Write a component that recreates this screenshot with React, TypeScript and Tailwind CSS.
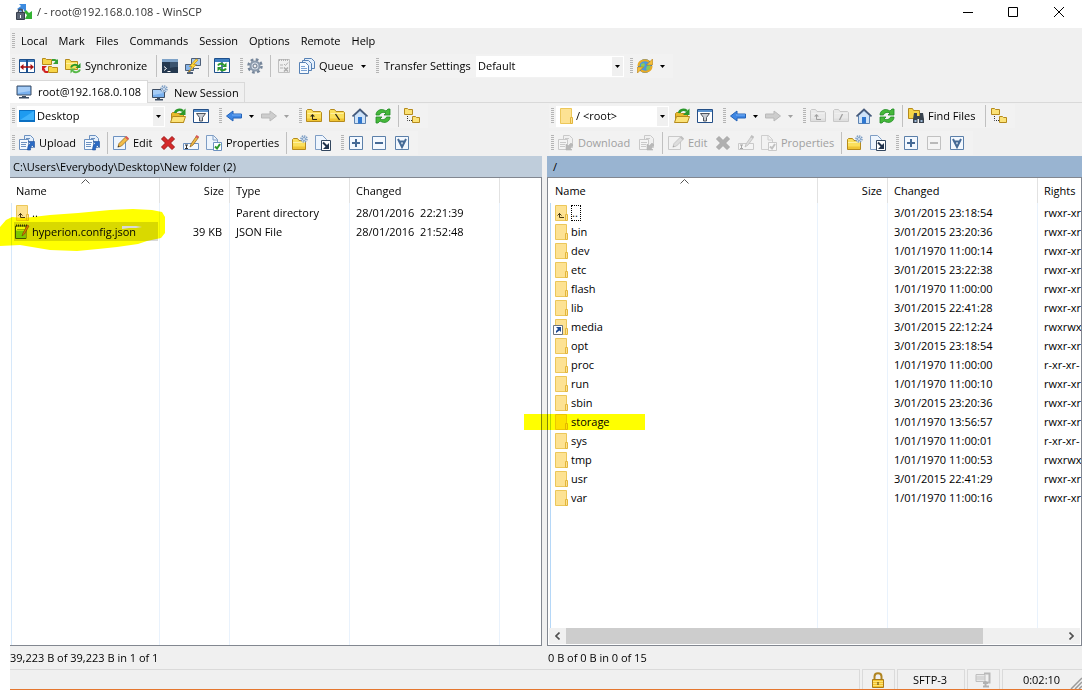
import type { ReactNode } from 'react'

interface FileRow {
  name: string
  icon: ReactNode
  size?: string
  type?: string
  changed: string
  rights?: string
  state?: 'selected' | 'focused'
}

interface IconProps {
  children: ReactNode
  off?: boolean
}

function Icon({ children, off }: IconProps) {
  return (
    <svg
      className={off ? 'w-4 h-4 shrink-0 grayscale opacity-40' : 'w-4 h-4 shrink-0'}
      viewBox="0 0 16 16"
      fill="none"
      aria-hidden="true"
    >
      {children}
    </svg>
  )
}

const folderShape = (
  <>
    <path d="M.5 13.5v-11l1-1h4l1.5 2h7.500l1 1v9z" fill="#fbe05c" stroke="#b58a1c" />
    <path d="M1.500 5.500h13" stroke="#fff0a0" />
    <path d="M1 10.500h14v2.500H1z" fill="#f0c534" />
  </>
)

const pageShape = <path d="M.5.5h7l4 4v10h-11z" fill="#eef5fd" stroke="#7e9dc4" />

function CompareIcon() {
  return (
    <Icon>
      <path d="M.5 1.500h15v13H.5z" fill="#fff" stroke="#1c4f8c" />
      <path d="M1 2h14v2H1z" fill="#3f7fc1" />
      <path d="M8 2v12" stroke="#1c4f8c" strokeWidth="2" />
      <path d="M1 9l3.500-3v2.200h7V6L15 9l-3.500 3V9.800h-7V12z" fill="#a81010" />
    </Icon>
  )
}

function SyncFoldersIcon() {
  return (
    <Icon>
      <path d="M.5 6.500v-6h3l1 1h5v5z" fill="#f7d548" stroke="#b58a1c" />
      <path d="M6.500 14.500v-6h3l1 1h5v5z" fill="#f7d548" stroke="#b58a1c" />
      <path d="M10 2h2.500c1.500 0 2 1 2 2v1" stroke="#35a035" strokeWidth="2" />
      <path d="M11 6h5V1z" fill="#35a035" />
      <path d="M6 14H4c-1.500 0-2-1-2-3" stroke="#d02020" strokeWidth="2" />
      <path d="M0 13V8h5z" fill="#d02020" />
    </Icon>
  )
}

function SynchronizeIcon() {
  return (
    <Icon>
      <path d="M.5 11.500v-10h4l1.500 2h6.500v8z" fill="#fbe05c" stroke="#b58a1c" />
      <path d="M1 5.500h11" stroke="#fff0a0" />
      <path d="M6 9.500c1-3 5-3.500 7-1.500" stroke="#2b982b" strokeWidth="2" />
      <path d="M15.500 5v5h-5z" fill="#2b982b" />
      <path d="M15 11.500c-1 3-5 3.500-7 1.500" stroke="#57b947" strokeWidth="2" />
      <path d="M5.500 15.500v-5h5z" fill="#57b947" />
    </Icon>
  )
}

function TerminalIcon() {
  return (
    <Icon>
      <path d="M0 1h16v14H0z" fill="#24384f" />
      <path d="M0 1h16v3H0z" fill="#7fa3c8" />
      <path d="M8 4h8v5c-3 0-6 0-8 1z" fill="#3a536e" />
      <path d="M2 8.500l2.500 2L2 12.500" stroke="#fff" />
      <path d="M5.500 13.500h3" stroke="#fff" />
    </Icon>
  )
}

function PuttyIcon() {
  return (
    <Icon>
      <path d="M6.500.5h9v7h-9z" fill="#a9c8ea" stroke="#4d5f78" />
      <path d="M9 10.500h5" stroke="#4d5f78" />
      <path d="M.5 6.500h8v6h-8z" fill="#86b4e8" stroke="#4d5f78" />
      <path d="M2 15h6M4.500 13v2" stroke="#4d5f78" strokeWidth="2" />
      <path d="M11 1L4.500 8.500H7L3.500 14 11.500 6.500H8.500L13 2z" fill="#ffd83a" stroke="#c58e12" strokeWidth=".7" />
    </Icon>
  )
}

function PageRefreshIcon() {
  return (
    <Icon>
      <path d="M.5.5h15v14H.5z" fill="#fff" stroke="#1c4f8c" />
      <path d="M1 1h14v3H1z" fill="#3f7fc1" />
      <path d="M8 4v10" stroke="#1c4f8c" strokeWidth="1.500" />
      <path d="M4 7.500c1-2 4-2.500 6-.5" stroke="#2b982b" strokeWidth="2" />
      <path d="M12.500 4.500v4.500H8z" fill="#2b982b" />
      <path d="M12 10.500c-1 2-4 2.500-6 .5" stroke="#2b982b" strokeWidth="2" />
      <path d="M3.500 13.500V9H8z" fill="#2b982b" />
    </Icon>
  )
}

function GearIcon() {
  return (
    <Icon>
      <circle cx="8" cy="8" r="6.500" stroke="#76869a" strokeWidth="2.500" strokeDasharray="2.700 2.400" />
      <circle cx="8" cy="8" r="4.500" fill="#d5dde7" stroke="#8b9aac" strokeWidth="2" />
      <circle cx="8" cy="8" r="2" fill="#f0f0f0" stroke="#66768a" />
    </Icon>
  )
}

function ChecklistIcon() {
  return (
    <Icon off>
      <path d="M2.500 1.500h11v13h-11z" fill="#eee" stroke="#777" />
      <path d="M3 2h10" stroke="#555" strokeWidth="2" strokeDasharray="1 1" />
      <path d="M8 6l1.500 1.500L12 4.500M4 7h3M4 10h3" stroke="#555" />
      <path d="M8 9.500l4 4M12 9.500l-4 4" stroke="#444" strokeWidth="1.500" />
    </Icon>
  )
}

function QueueIcon() {
  return (
    <Icon>
      <path d="M5.500.5h7l3 3v7h-10z" fill="#e4effb" stroke="#5681b5" />
      <path d="M3.500 2.500h6l3 3v7h-9z" fill="#e4effb" stroke="#5681b5" />
      <path d="M.5 4.500h6l3 3v8h-9z" fill="#f5faff" stroke="#5681b5" />
      <path d="M2 8.500h4M2 10.500h6M2 12.500h6" stroke="#7ba3d4" />
    </Icon>
  )
}

function GlobeIcon() {
  return (
    <Icon>
      <circle cx="8" cy="8" r="6.500" fill="#4b97dc" stroke="#3577b8" />
      <path d="M4 6l3-1 1 2-2 3-2-1zM10 8l3-1 1 2-3 4-2-2z" fill="#8bc95a" />
      <path d="M1.500 8C1.500 3 7 .8 12 3.500" stroke="#e9ab25" strokeWidth="2" />
      <path d="M15.500 1v6h-6z" fill="#f3bf38" stroke="#b87e14" strokeWidth=".6" />
      <path d="M14.500 8c0 5-5.500 7.200-10.500 4.500" stroke="#e9ab25" strokeWidth="2" />
      <path d="M.5 15V9h6z" fill="#f3bf38" stroke="#b87e14" strokeWidth=".6" />
    </Icon>
  )
}

function MonitorIcon() {
  return (
    <Icon>
      <path d="M1 2h14v9H1z" fill="#79b0ee" stroke="#3c4d63" />
      <path d="M2 3h12v4L2 9z" fill="#a6cdf7" />
      <path d="M6 12h4v1H6zM3 13h10v1.500H3z" fill="#3c4d63" />
    </Icon>
  )
}

function NewSessionIcon() {
  return (
    <Icon>
      <path d="M.5 4.500h12v8H.5z" fill="#79b0ee" stroke="#3c4d63" />
      <path d="M1 5h11v3L1 10z" fill="#a6cdf7" />
      <path d="M5 13h3v1H5zM3 14h8v1.500H3z" fill="#3c4d63" />
      <circle cx="12" cy="4" r="3" fill="#e9f1fa" stroke="#7d9dc2" strokeWidth="1.500" strokeDasharray="1.500 .8" />
      <circle cx="12" cy="4" r="1.500" stroke="#7d9dc2" />
    </Icon>
  )
}

function OpenFolderIcon() {
  return (
    <Icon>
      <path d="M1.500 14.500v-9l1-1h4l1 1h6v9z" fill="#e8b92b" stroke="#b58a1c" />
      <path d="M.5 14.500l2-6h13l-2 6z" fill="#fbe277" stroke="#b58a1c" />
      <path d="M5 5c1-3.500 5-4 8-2" stroke="#2b982b" strokeWidth="2.500" />
      <path d="M15.500.5v6.500h-6.500z" fill="#2b982b" />
    </Icon>
  )
}

function FilterIcon() {
  return (
    <Icon>
      <path d="M.5 1.500h15v13H.5z" fill="#fff" stroke="#244f87" />
      <path d="M1 2h14v2H1z" fill="#5a93cf" />
      <path d="M3.500 5.500h9l-3 4v3.500h-3V9.500z" fill="#c9cdd3" stroke="#4d545e" />
    </Icon>
  )
}

function BackIcon() {
  return (
    <Icon>
      <path d="M.5 8L7 3v3h8.500v4H7v3z" fill="#3f87e4" stroke="#2463b8" />
      <path d="M6 7h9" stroke="#79b1f5" />
    </Icon>
  )
}

function ForwardIcon() {
  return (
    <Icon>
      <path d="M15.500 8L9 3v3H.5v4H9v3z" fill="#cdcdcd" stroke="#b9b9b9" />
    </Icon>
  )
}

function ParentFolderIcon({ off }: { off?: boolean }) {
  return (
    <Icon off={off}>
      {folderShape}
      <path d="M6.500 7v4.500H11" stroke="#2b2412" />
      <path d="M4 8.500L6.500 6 9 8.500z" fill="#2b2412" />
    </Icon>
  )
}

function RootFolderIcon({ off }: { off?: boolean }) {
  return (
    <Icon off={off}>
      {folderShape}
      <path d={off ? 'M9.500 6l-3 6' : 'M6.500 6l4 6'} stroke="#2b2412" strokeWidth="1.300" />
    </Icon>
  )
}

function HomeIcon() {
  return (
    <Icon>
      <path d="M2.500 7.500L8 2.500l5.500 5v8h-11z" fill="#cfe3f8" stroke="#5c83b2" />
      <path d="M.5 8.500L8 1.500l7.500 7" stroke="#44597a" strokeWidth="1.700" />
      <path d="M6 9h4v6.500H6z" fill="#2f77d0" />
    </Icon>
  )
}

function RefreshIcon() {
  return (
    <Icon>
      <path d="M1 7c0-4 4-6.500 8-5l2 1 2-2h2v6H9l2-2C8 3.500 5 5 4.500 7z" fill="#46b83a" stroke="#1f8a25" strokeWidth=".8" />
      <path d="M15 9c0 4-4 6.500-8 5l-2-1-2 2H1V9h6l-2 2c3 1.500 6 0 6.500-2z" fill="#46b83a" stroke="#1f8a25" strokeWidth=".8" />
    </Icon>
  )
}

function TreeIcon() {
  return (
    <Icon>
      <path d="M.5 6.500v-6h3l1 1h4v5z" fill="#fbe277" stroke="#b58a1c" />
      <path d="M8.500 14.500v-6h3l1 1h3v5z" fill="#fbe277" stroke="#b58a1c" />
      <path d="M3.500 8v4.500H8" stroke="#333" strokeDasharray="1 1" />
    </Icon>
  )
}

function TransferIcon({ off }: { off?: boolean }) {
  return (
    <Icon off={off}>
      <path d="M5.500.5h6l3 3v9h-9z" fill="#e4effb" stroke="#6c91c0" />
      <path d="M.5 4.500h9v10h-9z" fill="#f5faff" stroke="#6c91c0" />
      <path d="M2 7.500h6M2 9.500h5M2 11.500h5M7 3.500h4" stroke="#6c91c0" />
      <path d={off ? 'M8 9v6h6l-2-2 3-3-2-2-3 3z' : 'M9.500 6.500h6v6l-2-2c-1.500.5-2 2-2 4.500h-3c0-3.500 1-5.500 3-6.500z'} fill="#2a6ac4" stroke={off ? '#555' : '#1c4f9c'} strokeWidth=".6" />
    </Icon>
  )
}

function EditIcon({ off }: { off?: boolean }) {
  return (
    <Icon off={off}>
      <path d="M.5 1.500h12v13H.5z" fill="#eef5fd" stroke="#6c91c0" />
      <path d="M5 12l1-3.500L13 1.500l2.500 2.500-7 7z" fill="#f2bd49" stroke="#9a6a1c" strokeWidth=".8" />
      <path d="M12 2.500l1.500-1.500 2.500 2.500-1.500 1.500z" fill="#d9585a" />
      <path d="M4.500 12.500l2-1-1-1z" fill="#333" />
    </Icon>
  )
}

function DeleteIcon({ off }: { off?: boolean }) {
  return (
    <Icon off={off}>
      <path d="M1.500 4l2.500-2.500L8 5.500l4-4L14.500 4l-4 4 4 4L12 14.500l-4-4-4 4L1.500 12l4-4z" fill="#d62a2a" stroke="#a01414" />
    </Icon>
  )
}

function RenameIcon({ off }: { off?: boolean }) {
  return (
    <Icon off={off}>
      <path d="M.5 8.500h15v6H.5z" fill="#f5faff" stroke="#6c91c0" />
      <path d="M2 10h3M3.500 10v3.500M2 13.500h3" stroke="#333" />
      <path d="M7 12l1-3L13.500 1l2 1.500L10 10z" fill="#f2bd49" stroke="#9a6a1c" strokeWidth=".8" />
      <path d="M12.500 2l1-2 2.500 1.500-1.500 2z" fill="#d9585a" />
    </Icon>
  )
}

function PropertiesIcon({ off }: { off?: boolean }) {
  return (
    <Icon off={off}>
      {pageShape}
      <path d="M7 .5v4.500h4.500" stroke="#7e9dc4" />
      <path d="M7.500 7.500h8v8h-8z" fill="#fff" stroke="#6c91c0" />
      <path d="M9 11.500l2 2L14 9" stroke="#2b982b" strokeWidth="2" />
    </Icon>
  )
}

function NewFolderIcon() {
  return (
    <Icon>
      <path d="M.5 14.500v-10l1-1h4l1.500 2h6.500v9z" fill="#fbe05c" stroke="#b58a1c" />
      <path d="M1 7.500h12" stroke="#fff0a0" />
      <path d="M1 11.500h12V14H1z" fill="#f0c534" />
      <circle cx="12" cy="4" r="3" fill="#e9f1fa" stroke="#7d9dc2" strokeWidth="1.500" strokeDasharray="1.500 .8" />
      <circle cx="12" cy="4" r="1.500" stroke="#7d9dc2" />
    </Icon>
  )
}

function ShortcutIcon() {
  return (
    <Icon>
      {pageShape}
      <path d="M6.500 5.500h9v10h-9z" fill="#fff" stroke="#33475f" />
      <path d="M8 7.500l4 4" stroke="#22344d" strokeWidth="2" />
      <path d="M14 8v6H8z" fill="#22344d" />
    </Icon>
  )
}

function BoxIcon({ mark, off }: { mark: string; off?: boolean }) {
  return (
    <Icon off={off}>
      <path d="M1.500 1.500h13v13h-13z" fill="#f3f8fe" stroke="#5b7fa9" />
      <path d={mark} stroke="#456a96" strokeWidth="2" />
    </Icon>
  )
}

function FindIcon() {
  return (
    <Icon>
      <path d="M.5 10.500v-10h4l1 2h6v8z" fill="#f7d548" stroke="#b58a1c" />
      <path d="M6 5h3v3h3V5h3l1 6v4h-5v-4H9.500v4H5v-4z" fill="#39434f" />
      <path d="M6.500 12h2v2h-2zM12.500 12h2v2h-2z" fill="#9db9d8" />
    </Icon>
  )
}

function AppIcon() {
  return (
    <Icon>
      <path d="M3 0h7v7H8V5L5 8 1 5l4-3z" fill="#3d8be0" />
      <path d="M16 15V7l-3 2-3-3-2 2 3 3-2 4z" fill="#33b233" />
      <path d="M2.500 9V7.500c0-3 4-3 4 0V9" stroke="#4b5363" strokeWidth="1.500" />
      <path d="M.5 8.500h8v7h-8z" fill="#5b6474" stroke="#39404e" />
      <path d="M4 11h1v3H4z" fill="#fff" />
    </Icon>
  )
}

function FolderIcon({ mark }: { mark?: 'up' | 'link' }) {
  return (
    <svg className="w-3 h-4 shrink-0 overflow-visible" viewBox="0 0 12 16" fill="none" aria-hidden="true">
      <path d="M.5.5h11v15H.5z" fill="#fde293" stroke="#ecc75a" />
      <path d="M10.500 9.500h2v6h-2z" fill="#fde293" stroke="#e3b63c" />
      {mark === 'up' && <path d="M4.500 8v4.500H9M2.500 10.500l2-2 2 2" stroke="#4a3a10" />}
      {mark === 'link' && (
        <>
          <path d="M-1.500 6.500h9v9h-9z" fill="#fff" stroke="#6b7480" />
          <path d="M1 8h5v5l-1.500-1.500L1 14v-2l2-2z" fill="#1c4a94" />
        </>
      )}
    </svg>
  )
}

function JsonIcon() {
  return (
    <svg className="w-4 h-4 shrink-0 -ml-0.5" viewBox="0 0 16 16" fill="none" aria-hidden="true">
      <path d="M1.500 2h10.500v12.500H1.500z" fill="#f4f9ec" stroke="#44543a" />
      <path d="M2 6.500h9.500V14H2z" fill="#7cc850" />
      <path d="M2 1.500h11" stroke="#333" strokeWidth="2" strokeDasharray="1 1" />
      <path d="M3 5.500h8" stroke="#9bb48a" />
      <path d="M8 12l1-3 4.500-8 1.500 1-4.500 8z" fill="#e07a2a" stroke="#7a3a10" strokeWidth=".6" />
    </svg>
  )
}

function Caret({ off }: { off?: boolean }) {
  return (
    <svg className="w-[5px] h-[3px] shrink-0" viewBox="0 0 5 3" aria-hidden="true">
      <path d="M0 0h5L2.500 3z" fill={off ? '#a0a0a0' : '#000'} />
    </svg>
  )
}

function Grip() {
  return (
    <span className="ml-0.5 mr-px w-[3px] h-4 shrink-0 bg-[repeating-linear-gradient(to_bottom,#b4b4b4_0px,#b4b4b4_1px,#f2f2f2_1px,#f2f2f2_2px)]" />
  )
}

function Sep() {
  return (
    <span className="w-1.5 h-[22px] pl-[3px] shrink-0">
      <span className="block w-px h-full bg-[#c0c0c0]" />
    </span>
  )
}

interface ToolProps {
  label: string
  icon: ReactNode
  text?: boolean
  off?: boolean
  menu?: boolean
  width?: string
}

function Tool({ label, icon, text, off, menu, width = 'w-[23px]' }: ToolProps) {
  return (
    <button
      type="button"
      title={label}
      aria-label={label}
      disabled={off}
      className={`${width} h-[22px] pl-[3px] flex items-center shrink-0 whitespace-nowrap disabled:text-[#a0a0a0]`}
    >
      {icon}
      {text && <span className="ml-1">{label}</span>}
      {menu && <span className={text ? 'ml-2' : 'ml-[7px]'}><Caret off={off} /></span>}
    </button>
  )
}

function Bar({ children }: { children: ReactNode }) {
  return <div className="h-6 pr-1 flex items-center shrink-0 bg-[#f2f2f2]">{children}</div>
}

function Combo({ label, value, icon, width }: { label: string; value: string; icon?: ReactNode; width: string }) {
  return (
    <div className={`${width} h-[21px] flex items-center shrink-0 bg-white`}>
      {icon}
      <select aria-label={label} className="flex-1 min-w-0 pl-0.5 appearance-none bg-white outline-none">
        <option>{value}</option>
      </select>
      <span className="w-[11px] h-[19px] mr-px flex items-center justify-center bg-[#f0f0f0] pointer-events-none">
        <Caret />
      </span>
    </div>
  )
}

function NavBars({ remote }: { remote?: boolean }) {
  return (
    <div className={remote ? 'h-[53px] pl-0.5' : 'h-[53px]'}>
      <div className="flex items-start h-[27px] pt-px">
        <Bar>
          <Grip />
          <div className="ml-px mr-0.5">
            {remote ? (
              <Combo label="Remote directory" value="/ <root>" width="w-[113px]" icon={<span className="ml-1 mr-0.5"><FolderIcon /></span>} />
            ) : (
              <Combo
                label="Local drive"
                value="Desktop"
                width="w-[148px]"
                icon={
                  <svg className="w-4 h-4 ml-0.5 shrink-0" viewBox="0 0 16 16" aria-hidden="true">
                    <path d="M0 2h16v12H0z" fill="#0a6fc2" />
                    <path d="M1 3h14v9H1z" fill="#1e9bf0" />
                    <path d="M1 12L15 3v9z" fill="#3fb2fb" />
                  </svg>
                }
              />
            )}
          </div>
          <Tool label="Open directory" icon={<OpenFolderIcon />} />
          <Tool label="Filter" icon={<FilterIcon />} />
        </Bar>
        <Bar>
          <Grip />
          <Tool label="Back" icon={<BackIcon />} menu width="w-[35px]" />
          <Tool label="Forward" icon={<ForwardIcon />} menu off width="w-[35px]" />
        </Bar>
        <Bar>
          <Grip />
          <Tool label="Parent directory" icon={<ParentFolderIcon off={remote} />} off={remote} />
          <Tool label="Root directory" icon={<RootFolderIcon off={remote} />} off={remote} />
          <Tool label="Home directory" icon={<HomeIcon />} />
          <Tool label="Refresh" icon={<RefreshIcon />} />
          <Sep />
          {remote && (
            <>
              <Tool label="Find Files" icon={<FindIcon />} text width="w-[77px]" />
              <Sep />
            </>
          )}
          <Tool label="Tree" icon={<TreeIcon />} />
        </Bar>
      </div>
      <div className="flex items-center h-[26px]">
        <Bar>
          <Grip />
          {remote ? (
            <Tool label="Download" icon={<TransferIcon off />} text off width="w-[81px]" />
          ) : (
            <Tool label="Upload" icon={<TransferIcon />} text width="w-[65px]" />
          )}
          <Tool label="Transfer in background" icon={<TransferIcon off={remote} />} off={remote} />
          <Sep />
          <Tool label="Edit" icon={<EditIcon off={remote} />} text off={remote} width="w-[47px]" />
          <Tool label="Delete" icon={<DeleteIcon off={remote} />} off={remote} />
          <Tool label="Rename" icon={<RenameIcon off={remote} />} off={remote} />
          <Tool label="Properties" icon={<PropertiesIcon off={remote} />} text off={remote} width="w-[80px]" />
          <Sep />
          <Tool label="New directory" icon={<NewFolderIcon />} />
          <Tool label="New link" icon={<ShortcutIcon />} />
        </Bar>
        <Bar>
          <Grip />
          <Tool label="Select" icon={<BoxIcon mark="M8 4v8M4 8h8" />} />
          <Tool label="Unselect" icon={<BoxIcon mark="M4 8h8" off={remote} />} off={remote} />
          <Tool label="Invert selection" icon={<BoxIcon mark="M4 4l4 8 4-8M5.500 6.500h5" />} />
        </Bar>
      </div>
    </div>
  )
}

const localFiles: FileRow[] = [
  { name: '..', icon: <FolderIcon mark="up" />, type: 'Parent directory', changed: '28/01/2016  22:21:39' },
  { name: 'hyperion.config.json', icon: <JsonIcon />, size: '39 KB', type: 'JSON File', changed: '28/01/2016  21:52:48', state: 'selected' },
]

const remoteFiles: FileRow[] = [
  { name: '..', icon: <FolderIcon mark="up" />, changed: '3/01/2015 23:18:54', rights: 'rwxr-xr', state: 'focused' },
  { name: 'bin', icon: <FolderIcon />, changed: '3/01/2015 23:20:36', rights: 'rwxr-xr' },
  { name: 'dev', icon: <FolderIcon />, changed: '1/01/1970 11:00:14', rights: 'rwxr-xr' },
  { name: 'etc', icon: <FolderIcon />, changed: '3/01/2015 23:22:38', rights: 'rwxr-xr' },
  { name: 'flash', icon: <FolderIcon />, changed: '1/01/1970 11:00:00', rights: 'rwxr-xr' },
  { name: 'lib', icon: <FolderIcon />, changed: '3/01/2015 22:41:28', rights: 'rwxr-xr' },
  { name: 'media', icon: <FolderIcon mark="link" />, changed: '3/01/2015 22:12:24', rights: 'rwxrwx' },
  { name: 'opt', icon: <FolderIcon />, changed: '3/01/2015 23:18:54', rights: 'rwxr-xr' },
  { name: 'proc', icon: <FolderIcon />, changed: '1/01/1970 11:00:00', rights: 'r-xr-xr-' },
  { name: 'run', icon: <FolderIcon />, changed: '1/01/1970 11:00:10', rights: 'rwxr-xr' },
  { name: 'sbin', icon: <FolderIcon />, changed: '3/01/2015 23:20:36', rights: 'rwxr-xr' },
  { name: 'storage', icon: <FolderIcon />, changed: '1/01/1970 13:56:57', rights: 'rwxr-xr' },
  { name: 'sys', icon: <FolderIcon />, changed: '1/01/1970 11:00:01', rights: 'r-xr-xr-' },
  { name: 'tmp', icon: <FolderIcon />, changed: '1/01/1970 11:00:53', rights: 'rwxrwx' },
  { name: 'usr', icon: <FolderIcon />, changed: '3/01/2015 22:41:29', rights: 'rwxr-xr' },
  { name: 'var', icon: <FolderIcon />, changed: '1/01/1970 11:00:16', rights: 'rwxr-xr' },
]

function FileTable({ rows, remote }: { rows: FileRow[]; remote?: boolean }) {
  const th = 'h-[25px] border-l border-[#e2e2e2] pl-1.5 font-normal text-left'
  const td = 'border-l border-[#e9f2fc] pl-1.5 whitespace-pre overflow-hidden'
  return (
    <table className="w-full table-fixed border-separate border-spacing-0">
      <colgroup>
        <col className={remote ? 'w-[267px]' : 'w-[148px]'} />
        <col className="w-[70px]" />
        {!remote && <col className="w-[120px]" />}
        <col className="w-[150px]" />
        <col />
      </colgroup>
      <thead>
        <tr>
          <th className="relative h-[25px] pl-[5px] font-normal text-left">
            Name
            <svg className="absolute left-1/2 top-px -ml-1 w-[9px] h-[5px]" viewBox="0 0 9 5" fill="none" aria-hidden="true">
              <path d="M.5 4.500l4-4 4 4" stroke="#555" />
            </svg>
          </th>
          <th className="h-[25px] border-l border-[#e2e2e2] pr-[5px] font-normal text-right">Size</th>
          {!remote && <th className={th}>Type</th>}
          <th className={th}>Changed</th>
          <th className={th}>{remote ? 'Rights' : ''}</th>
        </tr>
      </thead>
      <tbody>
        {rows.map((r) => (
          <tr key={r.name} className="h-[19px]">
            <td className={remote ? 'p-0 border-l border-[#b5d7f7]' : 'p-0 border-l border-[#d6e8fa]'}>
              <div
                className={
                  r.state === 'selected'
                    ? 'ml-0.5 mr-px pl-0.5 h-[19px] flex items-center gap-1 bg-[#d9d9d9]'
                    : 'pl-1 h-[19px] flex items-center gap-1'
                }
              >
                {r.icon}
                <span
                  className={
                    r.state === 'focused'
                      ? 'w-2.5 border border-dotted border-black leading-[14px]'
                      : r.state === 'selected'
                        ? '-ml-0.5'
                        : ''
                  }
                >
                  {r.name}
                </span>
              </div>
            </td>
            <td className="border-l border-[#e9f2fc] pr-[7px] text-right">{r.size}</td>
            {!remote && <td className={td}>{r.type}</td>}
            <td className={td}>{r.changed}</td>
            <td className={td}>{r.rights}</td>
          </tr>
        ))}
        {/* takes the leftover height so the column rules reach the bottom */}
        <tr>
          <td className={remote ? 'border-l border-[#b5d7f7]' : 'border-l border-[#d6e8fa]'} />
          <td className={td} />
          {!remote && <td className={td} />}
          <td className={td} />
          <td className={td} />
        </tr>
      </tbody>
    </table>
  )
}

function ScrollBar() {
  return (
    <div className="h-4 mb-px mx-px flex items-center bg-[#f0f0f0]">
      <button type="button" aria-label="Scroll left" className="w-[17px] h-4 flex items-center justify-center">
        <svg className="w-[5px] h-2" viewBox="0 0 5 8" fill="none"><path d="M4.500.5L1 4l3.500 3.500" stroke="#505050" strokeWidth="1.600" /></svg>
      </button>
      <div className="flex-1 h-full">
        <div className="w-[84%] h-full bg-[#cdcdcd]" />
      </div>
      <button type="button" aria-label="Scroll right" className="w-[17px] h-4 flex items-center justify-center">
        <svg className="w-[5px] h-2" viewBox="0 0 5 8" fill="none"><path d="M.5.5L4 4 .5 7.500" stroke="#505050" strokeWidth="1.600" /></svg>
      </button>
    </div>
  )
}

const menus = ['Local', 'Mark', 'Files', 'Commands', 'Session', 'Options', 'Remote', 'Help']

export default function App() {
  return (
    <div className="min-h-screen pl-2.5 flex flex-col bg-white text-black text-[11px] leading-4 font-['Open_Sans','Noto_Sans',sans-serif]">
      <header className="h-7 pl-1.5 pb-1 flex items-center">
        <AppIcon />
        <h1 className="ml-[5px] flex-1 text-[#333]">/ - root@192.168.0.108 - WinSCP</h1>
        <div className="flex items-center">
          <button type="button" aria-label="Minimize" className="w-[45px] h-6 flex items-center justify-center">
            <svg className="w-2.5 h-2.5" viewBox="0 0 10 10" fill="none"><path d="M0 5.500h10" stroke="#000" /></svg>
          </button>
          <button type="button" aria-label="Maximize" className="w-[46px] h-6 flex items-center justify-center">
            <svg className="w-2.5 h-2.5" viewBox="0 0 10 10" fill="none"><path d="M.5.5h9v9h-9z" stroke="#000" /></svg>
          </button>
          <button type="button" aria-label="Close" className="w-[46px] h-6 flex items-center justify-center">
            <svg className="w-2.5 h-2.5" viewBox="0 0 10 10" fill="none"><path d="M0 0l10 10M10 0L0 10" stroke="#000" /></svg>
          </button>
        </div>
      </header>

      <div className="flex-1 flex flex-col bg-[#f0f0f0] border-b border-[#e5772f]">
        <nav className="h-[26px] flex items-center">
          <Grip />
          <div className="ml-[5px] flex gap-[11px]">
            {menus.map((m) => (
              <button key={m} type="button">{m}</button>
            ))}
          </div>
        </nav>

        <div className="h-[26px] flex items-start">
          <Bar>
            <Grip />
            <Tool label="Compare directories" icon={<CompareIcon />} />
            <Tool label="Mirror directories" icon={<SyncFoldersIcon />} />
            <Tool label="Synchronize" icon={<SynchronizeIcon />} text width="w-[91px]" />
            <Sep />
            <Tool label="Console" icon={<TerminalIcon />} />
            <Tool label="Open in PuTTY" icon={<PuttyIcon />} />
            <Sep />
            <Tool label="Synchronize browsing" icon={<PageRefreshIcon />} />
          </Bar>
          <Bar>
            <Grip />
            <Tool label="Preferences" icon={<GearIcon />} />
            <Sep />
            <Tool label="Process queue" icon={<ChecklistIcon />} off />
            <Tool label="Queue" icon={<QueueIcon />} text menu width="w-[74px]" />
          </Bar>
          <Bar>
            <Grip />
            <span className="w-[96px] pl-1 whitespace-nowrap">Transfer Settings</span>
            <Combo label="Transfer Settings" value="Default" width="w-[148px]" />
          </Bar>
          <Bar>
            <Grip />
            <Tool label="Check for updates" icon={<GlobeIcon />} menu width="w-[35px]" />
          </Bar>
        </div>

        <div className="h-[23px] flex items-end" role="tablist">
          <button type="button" role="tab" aria-selected="true" className="w-[138px] h-[23px] pl-1.5 pb-px flex items-center gap-1.5 bg-white border-t border-r border-[#d9d9d9] whitespace-nowrap">
            <MonitorIcon />
            root@192.168.0.108
          </button>
          <button type="button" role="tab" aria-selected="false" className="w-[97px] h-[21px] pl-1 flex items-center gap-1.5 border-t border-r border-b border-[#d9d9d9] whitespace-nowrap">
            <NewSessionIcon />
            New Session
          </button>
          <div className="flex-1 h-full border-b border-[#d9d9d9]" />
        </div>

        <main className="flex-1 grid grid-cols-[532fr_5px_535fr]">
          <section className="relative min-w-0 flex flex-col">
            <NavBars />
            <div className="h-[22px] pl-[3px] border-b border-[#828790] bg-[#bfcddb] flex items-center">
              C:\Users\Everybody\Desktop\New folder (2)
            </div>
            <div className="flex-1 pl-px flex bg-white border-r border-b border-[#828790]">
              <FileTable rows={localFiles} />
            </div>
            <svg className="absolute -left-2.5 top-[105px] w-[166px] h-11 mix-blend-multiply pointer-events-none" viewBox="0 0 166 44" aria-hidden="true">
              <path d="M0 19L6 12 12 9 24 10 50 7 78 5 110 2 133 1 152 2 162 4 165 9 165 25 161 30 147 33 138 36 117 39 98 41 77 43 50 42 20 37 0 38z" fill="#ff0" />
            </svg>
            <svg className="absolute left-[111px] top-[122px] w-[22px] h-1.5 pointer-events-none" viewBox="0 0 22 6" aria-hidden="true">
              <path d="M1 1h14l6 1-6 1H8L1 4z" fill="#d9d9d9" />
            </svg>
          </section>
          <div />
          <section className="relative min-w-0 flex flex-col">
            <NavBars remote />
            <div className="h-[22px] pl-1.5 border-b border-[#828790] bg-[#99b4d1] flex items-center">/</div>
            <div className="flex-1 flex flex-col bg-white border-x border-b border-[#828790] overflow-hidden">
              <div className="flex-1 pl-0.5 flex">
                <FileTable rows={remoteFiles} remote />
              </div>
              <ScrollBar />
            </div>
            <div className="absolute -left-[23px] top-[311px] w-[121px] h-4 bg-[#ff0] mix-blend-multiply pointer-events-none" />
          </section>
        </main>

        <div className="h-[23px] grid grid-cols-[532fr_5px_535fr] items-center">
          <span>39,223 B of 39,223 B in 1 of 1</span>
          <span />
          <span className="pl-px">0 B of 0 B in 0 of 15</span>
        </div>

        <footer className="h-5 flex gap-0.5">
          <div className="flex-1 border-t border-r border-[#dadada]" />
          <div className="w-[33px] pr-0.5 border-t border-x border-[#dadada] flex items-center justify-center">
            <Icon>
              <path d="M4.500 8V4.500c0-4.500 7-4.500 7 0V8" stroke="#b08420" strokeWidth="2" />
              <path d="M2.500 7.500h11v8h-11z" fill="#f4c430" stroke="#a87b18" />
              <path d="M3 9.500h10M3 11.500h10M3 13.500h10" stroke="#fbe277" />
              <path d="M7.500 10h1v3h-1z" fill="#4a3608" />
            </Icon>
          </div>
          <div className="w-[68px] pr-0.5 border-t border-x border-[#dadada] flex items-center justify-center">SFTP-3</div>
          <div className="w-[33px] pr-0.5 border-t border-x border-[#dadada] flex items-center justify-center">
            <Icon off>
              <path d="M1 2.500h9v7H1z" fill="#ddd" stroke="#777" />
              <path d="M1 5h9M1 7h9" stroke="#888" />
              <path d="M9 1.500h5.500v9H9" stroke="#666" strokeWidth="2" />
              <path d="M10.500 9v5M8 14.500h6M8 11h5" stroke="#555" strokeWidth="2" />
            </Icon>
          </div>
          <div className="relative w-20 pr-0.5 border-t border-l border-[#dadada] flex items-center justify-center">
            0:02:10
            <svg className="absolute right-0 bottom-0 w-3 h-3" viewBox="0 0 12 12" fill="none" aria-hidden="true">
              <path d="M1 12L12 1M5 12l7-7M9 12l3-3" stroke="#9a9a9a" strokeWidth="1.500" />
            </svg>
          </div>
        </footer>
      </div>
    </div>
  )
}
